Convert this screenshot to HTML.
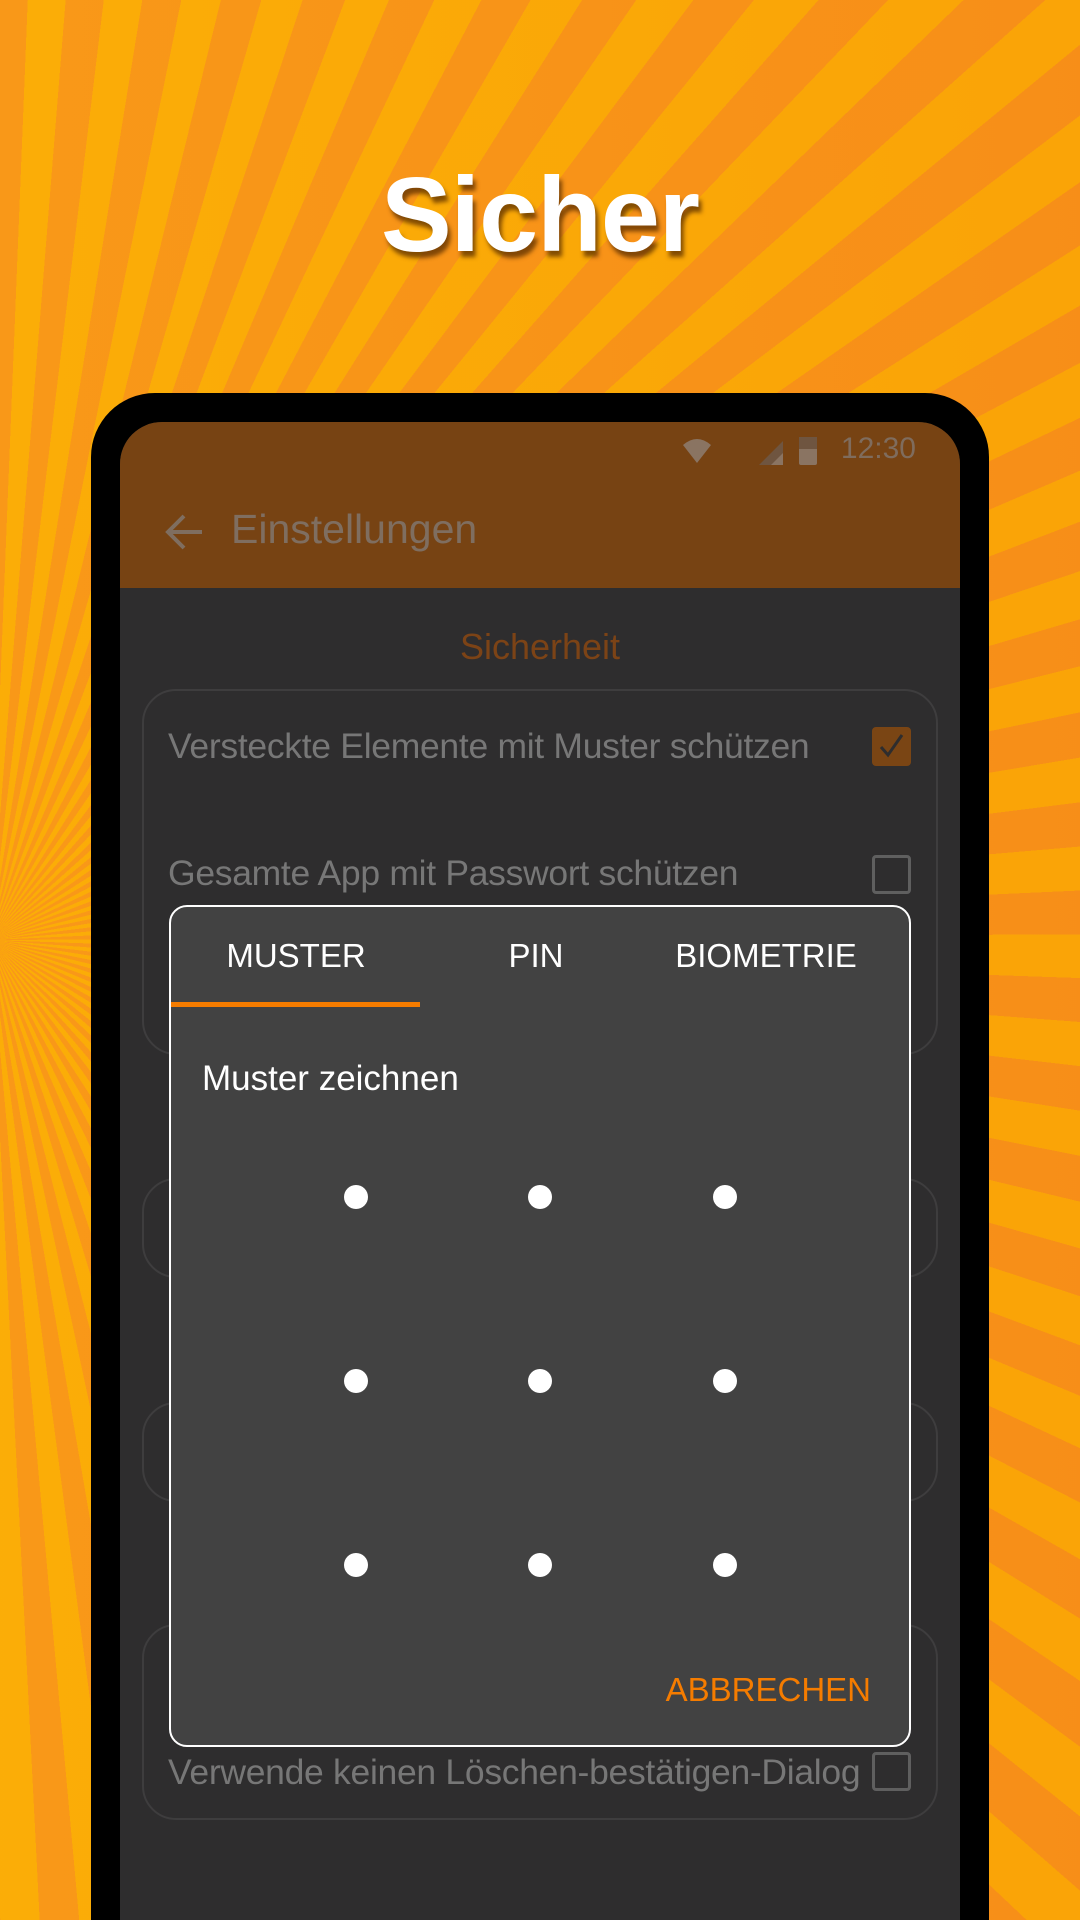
<!DOCTYPE html>
<html><head><meta charset="utf-8"><style>
*{margin:0;padding:0;box-sizing:border-box}
html,body{width:1080px;height:1920px;overflow:hidden}
body{position:relative;font-family:"Liberation Sans",sans-serif;background:#f8951a}
.bg{position:absolute;left:0;top:0;width:1080px;height:1920px;
background:repeating-conic-gradient(from 0deg at -10px 940px,#f8931b 0deg 2.3deg,#fbab08 2.3deg 4.6deg);}
.bg2{position:absolute;left:0;top:0;width:1080px;height:1920px;background:linear-gradient(90deg,rgba(255,190,0,.12),rgba(240,110,0,.12))}
.title{position:absolute;top:155px;left:0;width:1080px;text-align:center;font-size:106px;font-weight:bold;color:#fff;
text-shadow:3px 6px 4px rgba(90,45,0,.75);letter-spacing:-1px}
.phone{position:absolute;left:91px;top:393px;width:898px;height:1527px;background:#000;border-radius:64px 64px 0 0}
.screen{position:absolute;left:120px;top:422px;width:840px;height:1498px;background:#2e2d2e;border-radius:42px 42px 0 0;overflow:hidden}
.bar{position:absolute;left:0;top:0;width:840px;height:166px;background:#774313}
.time{position:absolute;right:44px;top:10px;font-size:30px;color:#7f6c5d}
.appt{position:absolute;left:111px;top:84px;font-size:41px;color:#7f6e60}
.sec{position:absolute;top:204px;width:840px;text-align:center;font-size:36px;color:#7c4316}
.card{position:absolute;left:22px;width:796px;border:2px solid #3e3d3e;border-radius:34px}
.t{position:absolute;left:48px;font-size:35.5px;color:#777;letter-spacing:-0.3px}
.cb{position:absolute;left:752px;width:39px;height:39px;border:3px solid #5f5f5f;border-radius:4px}
.dlg{position:absolute;left:169px;top:905px;width:742px;height:842px;background:#424242;border:2px solid #fff;border-radius:18px;overflow:hidden}
.tab{position:absolute;top:30px;font-size:33px;color:#fff;text-align:center}
.dot{position:absolute;width:24px;height:24px;border-radius:50%;background:#fff}
</style></head><body>
<div class="bg"></div><div class="bg2"></div>
<div class="title">Sicher</div>
<div class="phone"></div>
<div class="screen">
 <div class="bar">
  <svg style="position:absolute;left:561px;top:11px" width="140" height="40" viewBox="0 0 140 40">
   <path d="M2 12 Q16 0 30 12 L16 30 Z" fill="#8a7462"/>
   <path d="M78 32 L102 8 L102 32 Z" fill="#6f5540"/><path d="M90 32 L102 20 L102 32 Z" fill="#8a7462"/>
   <rect x="118" y="4" width="18" height="28" rx="2" fill="#8a7462"/><rect x="118" y="4" width="18" height="12" fill="#6f5540"/>
  </svg>
  <div class="time">12:30</div>
  <svg style="position:absolute;left:44px;top:91px" width="40" height="38" viewBox="0 0 40 38"><path d="M38 19 H5 M20 3 L4 19 L20 35" fill="none" stroke="#7f6e60" stroke-width="4"/></svg>
  <div class="appt">Einstellungen</div>
 </div>
 <div class="sec">Sicherheit</div>
 <div class="card" style="top:267px;height:366px">
  <div class="t" style="top:35px;left:24px">Versteckte Elemente mit Muster schützen</div>
  <div class="cb" style="left:728px;top:36px;background:#7a4514;border-color:#7a4514"><svg width="33" height="33" viewBox="0 0 33 33"><path d="M6 17 L13 25 L27 5" fill="none" stroke="#2e2d2e" stroke-width="3"/></svg></div>
  <div class="t" style="top:162px;left:24px">Gesamte App mit Passwort schützen</div>
  <div class="cb" style="left:728px;top:164px"></div>
 </div>
 <div class="card" style="top:756px;height:100px"></div>
 <div class="card" style="top:980px;height:100px"></div>
 <div class="card" style="top:1202px;height:196px">
  <div class="t" style="top:126px;left:24px">Verwende keinen Löschen-bestätigen-Dialog</div>
  <div class="cb" style="left:728px;top:126px"></div>
 </div>
</div>
<div class="dlg">
 <div class="tab" style="left:0;width:250px">MUSTER</div>
 <div class="tab" style="left:285px;width:160px">PIN</div>
 <div class="tab" style="left:490px;width:210px">BIOMETRIE</div>
 <div style="position:absolute;left:0;top:95px;width:249px;height:5px;background:#f57c00"></div>
 <div style="position:absolute;left:31px;top:152px;font-size:35px;color:#fff">Muster zeichnen</div>
 <div class="dot" style="left:173px;top:278px"></div><div class="dot" style="left:357px;top:278px"></div><div class="dot" style="left:542px;top:278px"></div>
 <div class="dot" style="left:173px;top:462px"></div><div class="dot" style="left:357px;top:462px"></div><div class="dot" style="left:542px;top:462px"></div>
 <div class="dot" style="left:173px;top:646px"></div><div class="dot" style="left:357px;top:646px"></div><div class="dot" style="left:542px;top:646px"></div>
 <div style="position:absolute;right:38px;top:764px;font-size:33px;color:#f57c00">ABBRECHEN</div>
</div>
</body></html>
